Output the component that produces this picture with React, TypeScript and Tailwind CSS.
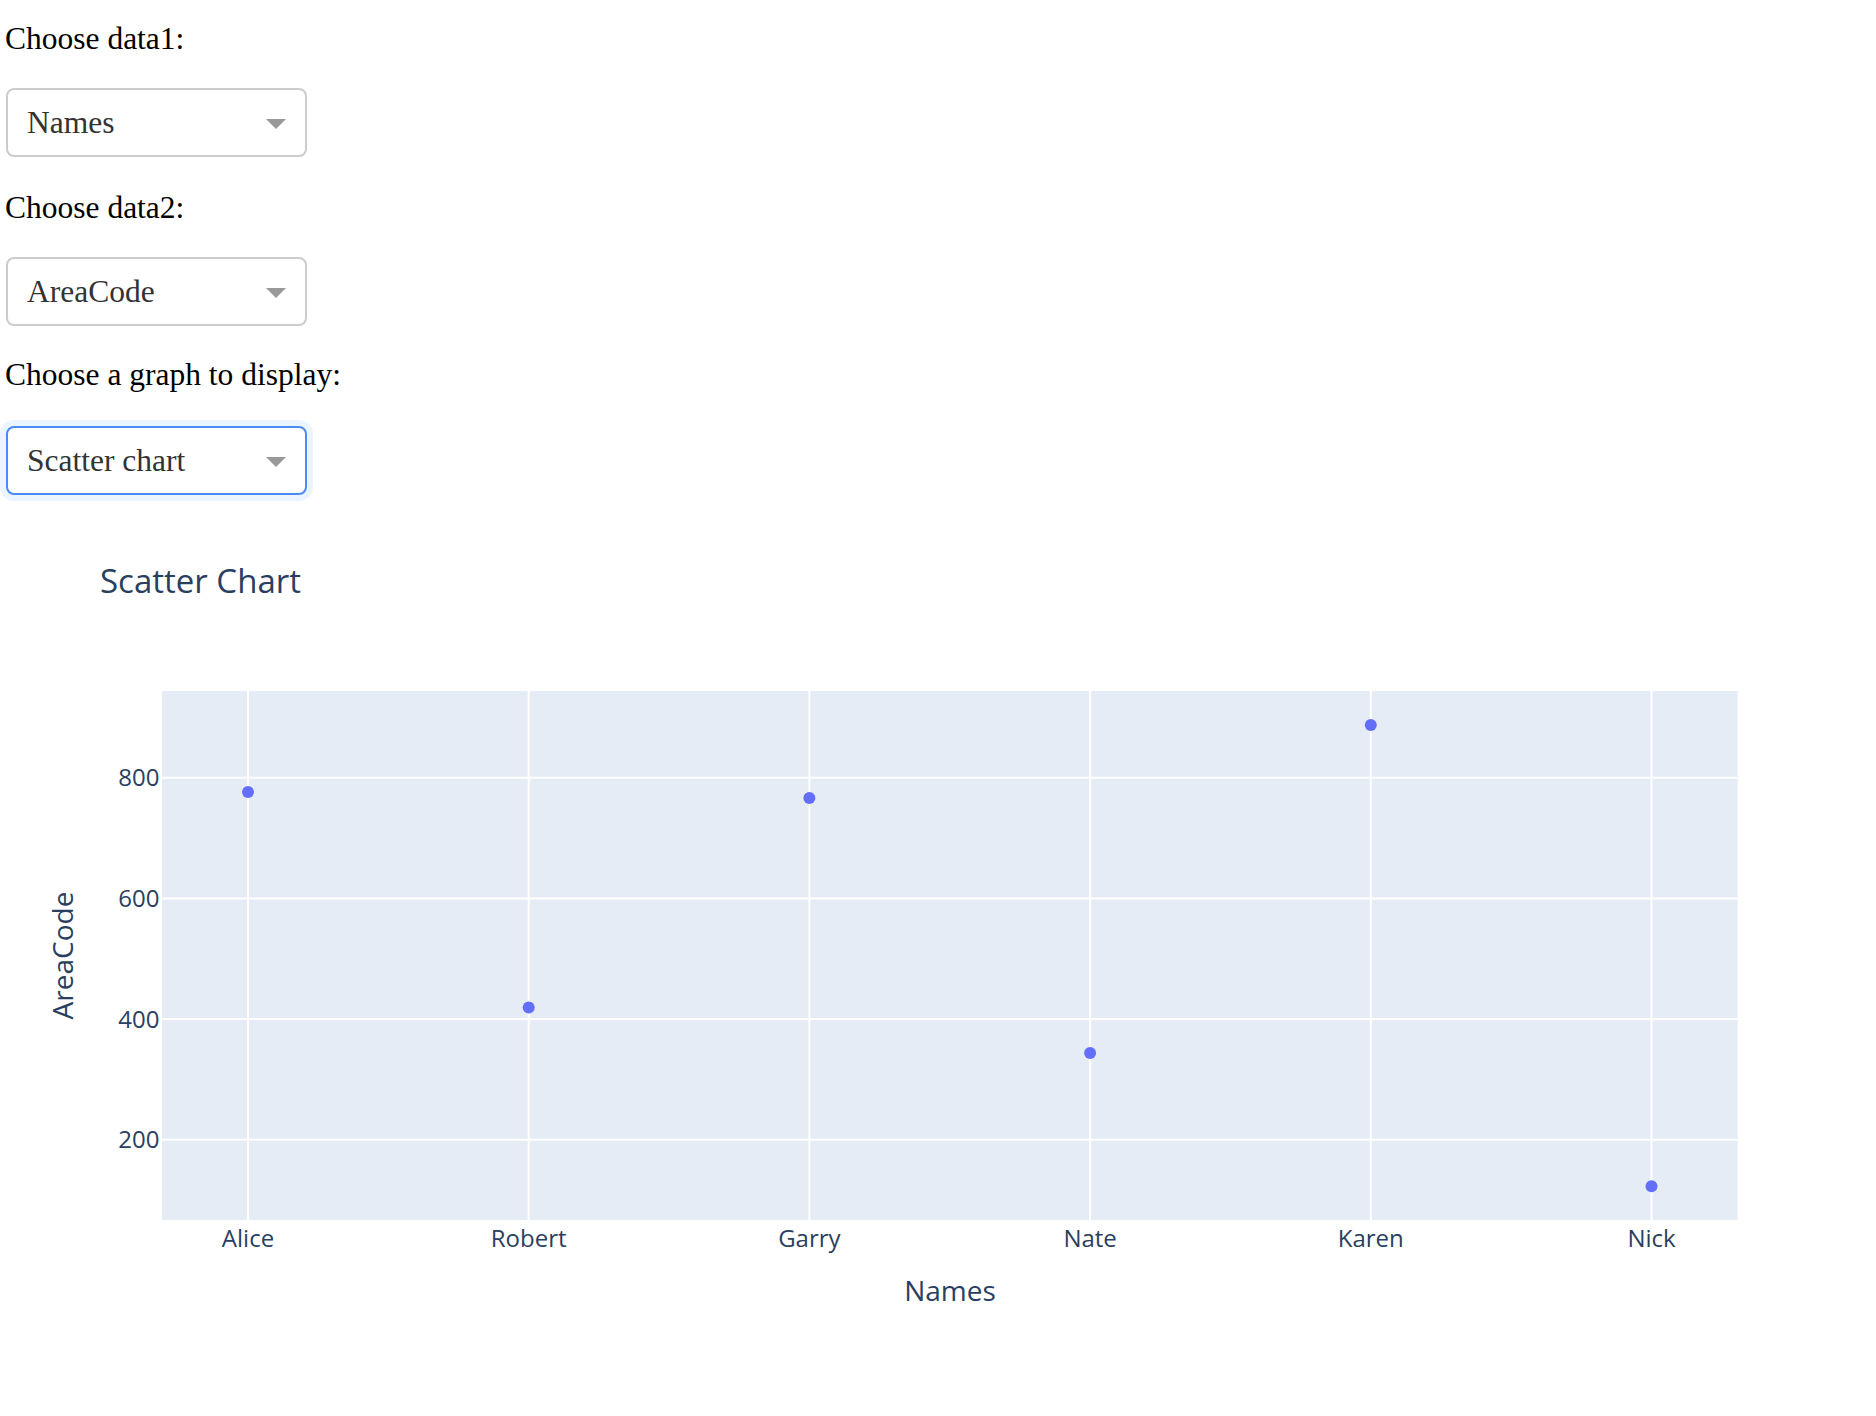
import React from "react";

const serif = { fontFamily: '"Liberation Serif", "Times New Roman", serif' };

function Dropdown({ value, focused }: { value: string; focused?: boolean }) {
  return (
    <div
      className={
        "w-[301px] h-[69px] rounded-[8px] border-2 bg-white flex items-center justify-between pl-[19px] pr-[19px] " +
        (focused
          ? "border-[#4a8cf7] shadow-[0_0_0_6px_rgba(0,126,255,0.08)]"
          : "border-[#cccccc]")
      }
    >
      <span className="text-[31.5px] leading-[36px] text-[#333333]" style={serif}>
        {value}
      </span>
      <span className="block w-0 h-0 border-l-[10px] border-r-[10px] border-t-[10px] border-l-transparent border-r-transparent border-t-[#999999] mt-[2px]" />
    </div>
  );
}

const cats = ["Alice", "Robert", "Garry", "Nate", "Karen", "Nick"];
const xs = [248, 528.7, 809.4, 1090.1, 1370.8, 1651.5];
const ys = [792, 1007.5, 798, 1053, 725, 1186.3];
const yTicks: [string, number][] = [
  ["200", 1139.8],
  ["400", 1019.1],
  ["600", 898.4],
  ["800", 777.7],
];

function Chart() {
  const left = 162;
  const right = 1737.6;
  const top = 691;
  const bottom = 1220;
  const font = '"Open Sans", "Noto Sans", sans-serif';
  return (
    <svg
      width={1876}
      height={916}
      viewBox="0 500 1876 916"
      className="block"
      style={{ fontFamily: font }}
    >
      <rect x={left} y={top} width={right - left} height={bottom - top} fill="#e5ecf6" />
      {xs.map((x, i) => (
        <line key={"gx" + i} x1={x} x2={x} y1={top} y2={bottom} stroke="#ffffff" strokeWidth={2} />
      ))}
      {yTicks.map(([, y], i) => (
        <line key={"gy" + i} x1={left} x2={right} y1={y} y2={y} stroke="#ffffff" strokeWidth={2} />
      ))}
      {xs.map((x, i) => (
        <circle key={"p" + i} cx={x} cy={ys[i]} r={6} fill="#636efa" />
      ))}
      {yTicks.map(([t, y], i) => (
        <text key={"ty" + i} x={159.5} y={y + 8.4} textAnchor="end" fontSize={24} fill="#2a3f5f">
          {t}
        </text>
      ))}
      {cats.map((c, i) => (
        <text key={"tx" + i} x={xs[i]} y={1246.7} textAnchor="middle" fontSize={24} fill="#2a3f5f">
          {c}
        </text>
      ))}
      <text x={100} y={593.3} fontSize={33} fill="#2a3f5f">
        Scatter Chart
      </text>
      <text x={950} y={1301} textAnchor="middle" fontSize={28} fill="#2a3f5f">
        Names
      </text>
      <text
        transform="translate(73.3,955.5) rotate(-90)"
        textAnchor="middle"
        fontSize={28}
        fill="#2a3f5f"
      >
        AreaCode
      </text>
    </svg>
  );
}

export default function App() {
  return (
    <div className="bg-white w-[1876px] min-h-[1416px]">
      <div className="h-[500px] pt-[21px] pl-[6px] flex flex-col items-start">
        <div className="text-[31.5px] leading-[36px] text-black -ml-[1px]" style={serif}>
          Choose data1:
        </div>
        <div className="mt-[31px]">
          <Dropdown value="Names" />
        </div>
        <div className="mt-[33px] text-[31.5px] leading-[36px] text-black -ml-[1px]" style={serif}>
          Choose data2:
        </div>
        <div className="mt-[31px]">
          <Dropdown value="AreaCode" />
        </div>
        <div className="mt-[31px] text-[31.5px] leading-[36px] text-black -ml-[1px]" style={serif}>
          Choose a graph to display:
        </div>
        <div className="mt-[33px]">
          <Dropdown value="Scatter chart" focused />
        </div>
      </div>
      <Chart />
    </div>
  );
}
